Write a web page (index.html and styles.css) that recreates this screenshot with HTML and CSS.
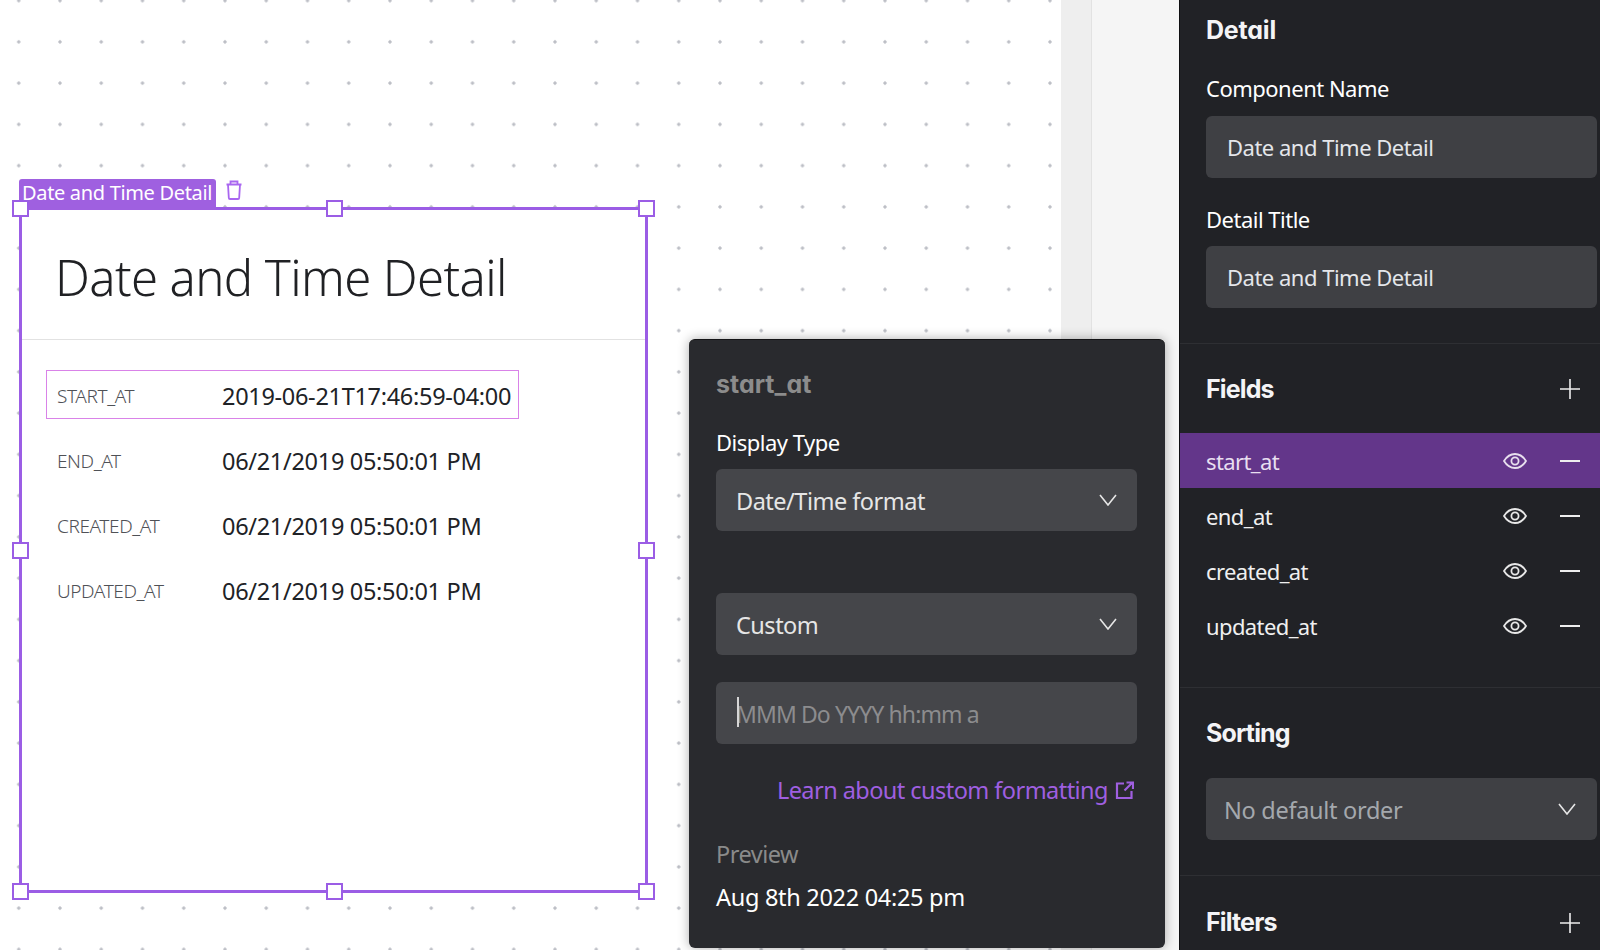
FILE: index.html
```html
<!DOCTYPE html>
<html lang="en">
<head>
<meta charset="utf-8">
<title>Date and Time Detail</title>
<link rel="stylesheet" href="styles.css">
</head>
<body>
<div class="app">
  <main class="canvas">
    <section class="comp">
      <div class="tag">Date and Time Detail</div>
      <svg class="trash" viewBox="0 0 18 20" width="18" height="20" fill="none" stroke="#a966f0" stroke-width="1.8"><path d="M1.5 4.500h15M5.500 4.500V1.500h7v3M3 4.500l.8 13.200c0 .7.5 1.300 1.200 1.300h8c.7 0 1.200-.6 1.200-1.300L15 4.500"/></svg>
      <span class="handle h-tl"></span><span class="handle h-tc"></span><span class="handle h-tr"></span>
      <span class="handle h-ml"></span><span class="handle h-mr"></span>
      <span class="handle h-bl"></span><span class="handle h-bc"></span><span class="handle h-br"></span>
      <header class="comp-head"><h1>Date and Time Detail</h1></header>
      <div class="rows">
        <div class="row active"><span class="k">START_AT</span><span class="v">2019-06-21T17:46:59-04:00</span></div>
        <div class="row"><span class="k">END_AT</span><span class="v">06/21/2019 05:50:01 PM</span></div>
        <div class="row"><span class="k">CREATED_AT</span><span class="v">06/21/2019 05:50:01 PM</span></div>
        <div class="row"><span class="k">UPDATED_AT</span><span class="v">06/21/2019 05:50:01 PM</span></div>
      </div>
    </section>
    <aside class="pop">
      <h3 class="pop-title">start_at</h3>
      <div class="pop-label">Display Type</div>
      <div class="ctl pop-ctl"><span>Date/Time format</span><svg class="chev" viewBox="0 0 18 12" width="18" height="12" fill="none" stroke="#e6e6e6" stroke-width="1.6"><path d="M1 1l8 10 8-10"/></svg></div>
      <div class="ctl pop-ctl second"><span>Custom</span><svg class="chev" viewBox="0 0 18 12" width="18" height="12" fill="none" stroke="#e6e6e6" stroke-width="1.6"><path d="M1 1l8 10 8-10"/></svg></div>
      <div class="ctl pop-ctl third"><i class="caret"></i><span class="ph">MMM Do YYYY hh:mm a</span></div>
      <div class="link-line"><span>Learn about custom formatting</span><svg viewBox="0 0 19 19" width="19" height="19" fill="none" stroke="#9f5fe0" stroke-width="2.2"><path d="M9 2.500H2v14.500h14.500V10M9.500 9.500L17.500 1.500M11.500 1.500h6.500V8"/></svg></div>
      <div class="prev-label">Preview</div>
      <div class="prev-val">Aug 8th 2022 04:25 pm</div>
    </aside>
  </main>
  <div class="gutter"></div>
  <div class="strip"></div>
  <aside class="panel">
    <section class="sec sec-detail">
      <h2 class="h-detail">Detail</h2>
      <div class="lab lab-1">Component Name</div>
      <div class="ctl p-ctl"><span>Date and Time Detail</span></div>
      <div class="lab lab-2">Detail Title</div>
      <div class="ctl p-ctl"><span>Date and Time Detail</span></div>
    </section>
    <section class="sec sec-fields">
      <div class="sec-head"><h2>Fields</h2><svg class="plus" viewBox="0 0 20 20" width="20" height="20" stroke="#eee" stroke-width="1.600"><path d="M10 0v20M0 10h20"/></svg></div>
      <ul class="fields">
        <li class="sel"><span>start_at</span><svg class="eye" viewBox="0 0 24 16" width="24" height="16" fill="none" stroke="#e8e0ee" stroke-width="1.800"><path d="M1 8c2.800-4.500 6.600-7 11-7s8.200 2.500 11 7c-2.800 4.500-6.600 7-11 7S3.800 12.500 1 8z"/><circle cx="12" cy="8" r="3.600"/></svg><i class="minus"></i></li>
        <li><span>end_at</span><svg class="eye" viewBox="0 0 24 16" width="24" height="16" fill="none" stroke="#e8e8e8" stroke-width="1.800"><path d="M1 8c2.800-4.500 6.600-7 11-7s8.200 2.500 11 7c-2.800 4.500-6.600 7-11 7S3.800 12.500 1 8z"/><circle cx="12" cy="8" r="3.600"/></svg><i class="minus"></i></li>
        <li><span>created_at</span><svg class="eye" viewBox="0 0 24 16" width="24" height="16" fill="none" stroke="#e8e8e8" stroke-width="1.800"><path d="M1 8c2.800-4.500 6.600-7 11-7s8.200 2.500 11 7c-2.800 4.500-6.600 7-11 7S3.800 12.500 1 8z"/><circle cx="12" cy="8" r="3.600"/></svg><i class="minus"></i></li>
        <li><span>updated_at</span><svg class="eye" viewBox="0 0 24 16" width="24" height="16" fill="none" stroke="#e8e8e8" stroke-width="1.800"><path d="M1 8c2.800-4.500 6.600-7 11-7s8.200 2.500 11 7c-2.800 4.500-6.600 7-11 7S3.800 12.500 1 8z"/><circle cx="12" cy="8" r="3.600"/></svg><i class="minus"></i></li>
      </ul>
    </section>
    <section class="sec sec-sort">
      <h2>Sorting</h2>
      <div class="ctl p-ctl sort-ctl"><span>No default order</span><svg class="chev" viewBox="0 0 18 12" width="18" height="12" fill="none" stroke="#e6e6e6" stroke-width="1.6"><path d="M1 1l8 10 8-10"/></svg></div>
    </section>
    <section class="sec-filters">
      <div class="sec-head"><h2>Filters</h2><svg class="plus" viewBox="0 0 20 20" width="20" height="20" stroke="#eee" stroke-width="1.600"><path d="M10 0v20M0 10h20"/></svg></div>
    </section>
  </aside>
</div>
</body>
</html>
```
FILE: styles.css
```css
* { box-sizing: border-box; }
html, body { margin: 0; height: 100%; overflow: hidden; }
body { font-family: "Noto Sans", "Open Sans", sans-serif; background: #fff; }
h1, h2, h3, ul { margin: 0; padding: 0; list-style: none; }

.app { display: flex; width: 1600px; height: 950px; overflow: hidden; }
.canvas {
  position: relative;
  flex: 0 0 1061px;
  height: 950px;
  background-color: #fff;
  background-image: radial-gradient(circle, #bcbec5 1.3px, rgba(188,190,197,0) 2px);
  background-size: 41.25px 41.25px;
  background-position: -1.9px -20px;
}
.gutter { flex: 0 0 31px; background: #eeeeee; border-right: 1px solid #e2e2e2; }
.strip { flex: 0 0 87px; background: #f5f5f5; }

.comp {
  position: absolute;
  left: 19px; top: 207px;
  width: 629px; height: 686px;
  background: #fff;
  border: 3px solid #9b5de5;
}
.tag {
  position: absolute;
  left: -3px; top: -31px;
  width: 197px; height: 31px;
  background: #9f60e0;
  border-radius: 3px 3px 0 0;
  color: #fff;
  font-size: 20px;
  line-height: 27px;
  padding-left: 3px;
  letter-spacing: -0.33px;
  white-space: nowrap;
}
.trash { position: absolute; left: 203px; top: -30px; }
.handle {
  position: absolute;
  z-index: 2;
  width: 17px; height: 17px;
  background: #fff;
  border: 2px solid #9b5de5;
}
.h-tl { left: -10px; top: -10px; }
.h-tc { left: calc(50% - 8px); top: -10px; }
.h-tr { right: -10px; top: -10px; }
.h-ml { left: -10px; top: calc(50% - 8px); }
.h-mr { right: -10px; top: calc(50% - 8px); }
.h-bl { left: -10px; bottom: -10px; }
.h-bc { left: calc(50% - 8px); bottom: -10px; }
.h-br { right: -10px; bottom: -10px; }

.comp-head { height: 130px; border-bottom: 1px solid #e2e2e2; padding: 33px 0 0 33px; }
.comp-head h1 { font-size: 49px; font-weight: 300; line-height: 68px; color: #202124; letter-spacing: -0.6px; white-space: nowrap; }
.rows { padding: 30px 0 0 23.5px; }
.row {
  display: flex;
  align-items: center;
  width: 473.5px; height: 49px;
  margin-bottom: 16.3px;
  padding: 2px 0 0 10.5px;
  border: 1px solid transparent;
}
.row.active { border-color: #d983e8; }
.k { flex: 0 0 165px; font-size: 19px; font-weight: 300; color: #4f5156; letter-spacing: -0.4px; }
.v { font-size: 23.500px; color: #202226; font-weight: 400; letter-spacing: -0.3px; white-space: nowrap; }

.pop {
  position: absolute;
  left: 689px; top: 339px;
  width: 476px; height: 609px;
  padding: 0 27px;
  background: #292a2e;
  border-radius: 6px;
  border-top: 1px solid #141416;
  box-shadow: 0 0 12px rgba(0,0,0,.32);
}
.pop-title, .sec h2, .sec-filters h2 {
  font-family: "Inter", "Noto Sans", sans-serif;
  font-feature-settings: "cv11";
  font-weight: 700;
}
.pop-title { color: #8c8c8c; font-size: 25px; line-height: 30px; padding-top: 29px; height: 61px; letter-spacing: 0; }
.pop-label { color: #fff; font-size: 22px; line-height: 30px; margin-top: 26px; letter-spacing: -0.5px; }
.ctl { display: flex; align-items: center; justify-content: space-between; border-radius: 6px; }
.pop-ctl {
  width: 421px; height: 62px;
  margin-top: 12px;
  padding: 0 20px;
  background: #45464a;
  color: #e6e6e6;
  font-size: 23.500px;
  letter-spacing: -0.5px;
}
.pop-ctl > span { padding-top: 1px; }
.chev { flex: none; margin-right: 0; }
.pop-ctl.second { margin-top: 62px; }
.pop-ctl.third { margin-top: 27px; position: relative; justify-content: flex-start; }
.caret { position: absolute; left: 21px; top: 15px; width: 1.500px; height: 30px; background: #d6d6d6; }
.ph { color: #8c8c8e; font-size: 23px; letter-spacing: -0.9px; }
.link-line {
  display: flex; justify-content: flex-end; align-items: center; gap: 7px;
  width: 421px;
  margin-top: 30px;
  padding-right: 3px;
  color: #9f5fe0;
  font-size: 23.500px;
  line-height: 32px;
  letter-spacing: -0.55px;
}
.prev-label { color: #8a8a8a; font-size: 23.500px; line-height: 32px; margin-top: 32px; letter-spacing: -0.5px; }
.prev-val { color: #fff; font-size: 23.500px; line-height: 32px; margin-top: 11px; letter-spacing: -0.3px; }

.panel {
  flex: 0 0 421px;
  height: 950px;
  background: #212226;
  border-left: 1px solid #0f0f11;
  color: #fff;
}
.sec { border-bottom: 1px solid #2e2f33; }
.sec h2, .sec-filters h2 { font-size: 25px; line-height: 32px; color: #f4f4f6; letter-spacing: -0.85px; }
.sec h2.h-detail { letter-spacing: -0.2px; }
.sec-detail { height: 344px; padding: 14px 0 0 26px; }
.lab { font-size: 22px; line-height: 30px; letter-spacing: -0.5px; }
.lab-1 { margin-top: 27px; }
.lab-2 { margin-top: 26px; }
.p-ctl {
  width: 391px; height: 62px;
  margin-top: 13px;
  padding: 0 19px 0 21px;
  background: #3f4044;
  color: #e4e6ea;
  font-size: 22px;
  letter-spacing: -0.5px;
}
.lab-2 + .p-ctl { margin-top: 12px; }
.sec-fields { height: 344px; padding-top: 29px; }
.sec-head { display: flex; justify-content: space-between; align-items: center; height: 32px; padding: 0 20px 0 26px; }
.fields { margin-top: 28px; }
.fields li {
  display: flex; align-items: center;
  height: 55px;
  padding-left: 26px;
  font-size: 22px;
  letter-spacing: -0.6px;
  color: #f0f0f0;
}
.fields li.sel { background: #63368a; color: #e8dff0; }
.fields li span { flex: 1; padding-top: 1px; }
.eye { flex: none; margin-right: 33px; }
.minus { flex: none; width: 20px; height: 2px; background: #eeeeee; margin-right: 20px; margin-top: 1px; }
.sec-sort { height: 188px; padding: 29px 0 0 26px; }
.sort-ctl { margin-top: 29px; color: #a4a8ad; font-size: 23.500px; letter-spacing: -0.3px; padding-left: 18px; padding-right: 21px; }
.sort-ctl > span { padding-top: 2px; }
.sec-filters { padding-top: 30px; }
.sec-filters .plus { margin-top: 1px; }
```
